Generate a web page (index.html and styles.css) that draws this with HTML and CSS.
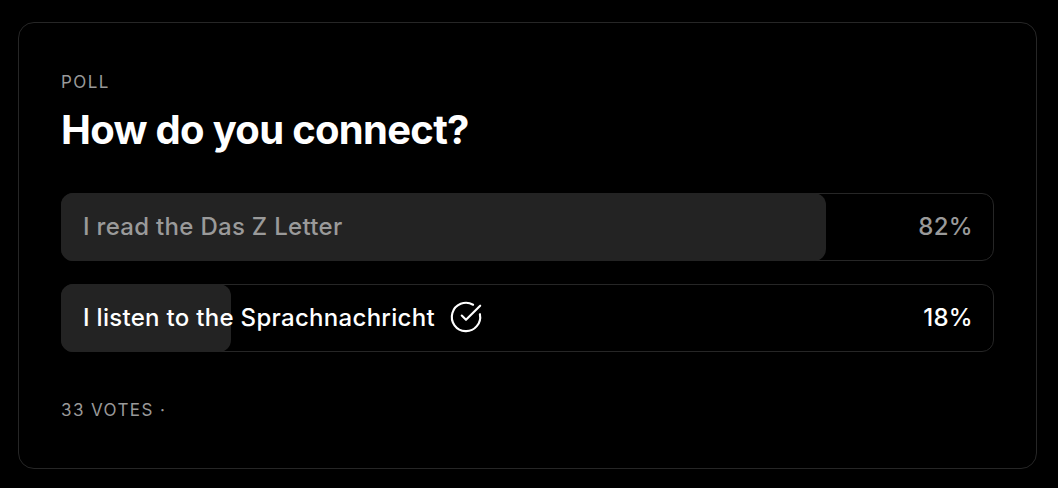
FILE: index.html
```html
<!DOCTYPE html>
<html lang="en">
<head>
    <meta charset="UTF-8">
    <meta name="viewport" content="width=device-width, initial-scale=1.0">
    <title>Poll</title>
    <link rel="stylesheet" href="styles.css">
</head>
<body>

    <div class="card">
        <div class="label">Poll</div>
        <h2>How do you connect?</h2>

        <div class="options">
            <div class="option">
                <div class="fill" style="width: calc(82% + 2px)"></div>
                <span class="text">I read the Das Z Letter</span>
                <span class="percent">82%</span>
            </div>
            <div class="option selected">
                <div class="fill" style="width: calc(18% + 2px)"></div>
                <span class="text">I listen to the Sprachnachricht</span>
                <svg class="check" viewBox="0 0 24 24" fill="none" stroke="currentColor" stroke-width="1.5" stroke-linecap="round" stroke-linejoin="round">
                    <path d="M21.801 10A10 10 0 1 1 17 3.335"/>
                    <path d="m9 11 3 3L22 4"/>
                </svg>
                <span class="percent">18%</span>
            </div>
        </div>

        <div class="votes">33 votes ·</div>
    </div>

</body>
</html>
```

FILE: styles.css
```css
body {
    margin: 0;
    padding: 22px 21px 19px 18px;
    background: #000;
    color: #fff;
    font-family: Inter, "Noto Sans", sans-serif;
}
.card {
    border: 1px solid #262626;
    border-radius: 16px;
    padding: 49px 42px 48px;
}
.label {
    font-size: 17px;
    line-height: 20px;
    letter-spacing: 1.4px;
    text-transform: uppercase;
    color: #999;
}
h2 {
    margin: 14px 0 0;
    font-size: 40px;
    line-height: 48px;
    font-weight: 700;
    letter-spacing: -0.7px;
}
.options {
    display: flex;
    flex-direction: column;
    gap: 23px;
    margin-top: 39px;
}
.option {
    position: relative;
    display: flex;
    align-items: center;
    height: 64px;
    padding: 0 20px 2px 21px;
    border: 1px solid #262626;
    border-radius: 12px;
    font-size: 24px;
    font-weight: 500;
    letter-spacing: 0.3px;
    color: #9a9a9a;
}
.option .fill {
    position: absolute;
    top: -1px;
    bottom: -1px;
    left: -1px;
    background: #232323;
    border-radius: 12px;
}
.option .text,
.option .percent,
.option .check {
    position: relative;
}
.option .percent {
    margin-left: auto;
}
.option.selected {
    color: #fff;
}
.check {
    width: 34px;
    height: 34px;
    margin-left: 14px;
}
.votes {
    margin-top: 48px;
    font-size: 17px;
    line-height: 20px;
    letter-spacing: 1.4px;
    text-transform: uppercase;
    color: #999;
}
```
